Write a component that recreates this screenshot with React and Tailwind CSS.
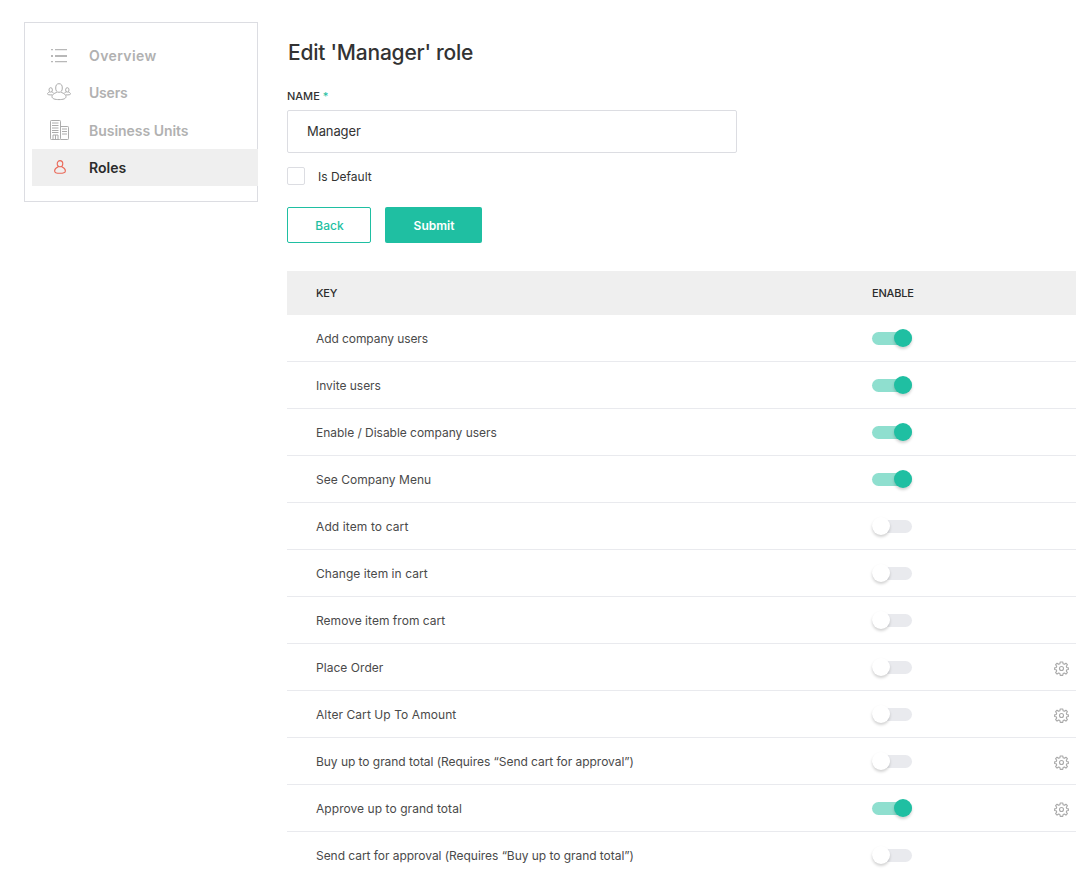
const NAV = [
  { label: "Overview", icon: ListIcon, text: "pb-px tracking-[0.4px]" },
  { label: "Users", icon: UsersIcon, text: "pb-px tracking-[-0.2px]" },
  { label: "Business Units", icon: BuildingsIcon, text: "pt-px tracking-[-0.03px]" },
  { label: "Roles", icon: RoleIcon, text: "pt-px tracking-[0px]", active: true },
];

const ROWS = [
  { label: "Add company users", on: true, text: "tracking-[-0.08px]" },
  { label: "Invite users", on: true, text: "tracking-[-0.03px]" },
  { label: "Enable / Disable company users", on: true, text: "tracking-[-0.03px]" },
  { label: "See Company Menu", on: true, text: "tracking-[0.02px]" },
  { label: "Add item to cart", text: "tracking-[0.11px]" },
  { label: "Change item in cart", text: "tracking-[0.05px]" },
  { label: "Remove item from cart", text: "tracking-[0.03px]" },
  { label: "Place Order", gear: true, text: "tracking-[0.05px]" },
  { label: "Alter Cart Up To Amount", gear: true, text: "tracking-[0.07px]" },
  { label: "Buy up to grand total (Requires “Send cart for approval”)", gear: true, text: "tracking-[-0.045px]" },
  { label: "Approve up to grand total", on: true, gear: true, text: "tracking-[0.06px]" },
  { label: "Send cart for approval (Requires “Buy up to grand total”)", text: "tracking-[-0.045px]" },
];

function ListIcon() {
  return (
    <svg className="mr-px" width="16" height="14" viewBox="0 0 16 14" fill="#b8b8b8">
      <path d="M0 0h2v1.300H0zM4 0h12v1.300H4zM0 6h2v2H0zM4 6h12v2H4zM0 12h2v1.300H0zM4 12h12v1.300H4z" />
    </svg>
  );
}

function UsersIcon() {
  return (
    <svg className="mr-px mb-px" width="24" height="18" viewBox="0 0 24 18" fill="none" stroke="#acacac" strokeWidth="1">
      <ellipse cx="12" cy="5" rx="3.3" ry="4.3" />
      <path d="M9.8 9.400C7 10.300 5 11.600 5 13.600c0 2.200 3 3 7 3s7-.8 7-3c0-2-2-3.300-4.800-4.200" />
      <ellipse cx="3.7" cy="6.900" rx="1.700" ry="2.200" />
      <ellipse cx="20.300" cy="6.900" rx="1.700" ry="2.200" />
      <path d="M2.700 9C1.200 9.500.5 10 .5 10.900c0 .8 1.600 1.100 4.500 1M4.700 9c.9.200 1.500.5 1.900 1M21.300 9c1.500.5 2.200 1 2.200 1.900 0 .8-1.600 1.100-4.500 1M19.300 9c-.9.200-1.500.5-1.900 1" />
    </svg>
  );
}

function BuildingsIcon() {
  return (
    <svg width="19" height="20" viewBox="0 0 19 20" fill="none" stroke="#acacac" strokeWidth="1">
      <rect x=".5" y=".5" width="10" height="19" rx=".8" />
      <path d="M10.500 6.500h7.200q.8 0 .8.8v11.400q0 .8-.8.8h-7.200" />
      <path d="M2 3h6.500M2 5.500h6.500M2 8h6.500M2 10.500h6.500M2 12.500h6.500M12 9h5M12 11.500h5M12 14h5M3 19.500v-4.500h5v4.500M5.500 15v4.500" />
    </svg>
  );
}

function RoleIcon() {
  return (
    <svg width="12" height="14" viewBox="0 0 12 14" fill="none" stroke="#ea6a5a" strokeWidth="1.100">
      <ellipse cx="6" cy="3.700" rx="2.800" ry="3.100" />
      <path d="M4.200 6.700C2.200 7.600.6 9 .6 10.900c0 1.700 2.300 2.400 5.400 2.400s5.400-.7 5.400-2.400c0-1.900-1.600-3.300-3.600-4.200" />
    </svg>
  );
}

function GearIcon() {
  return (
    <svg width="15" height="15" viewBox="0 0 24 24" fill="none" stroke="#a9a9a9" strokeWidth="1.800" strokeLinejoin="round">
      <path d="M10 1.500h4l.6 3 1.900.8 2.600-1.700 2.300 2.300-1.700 2.600.8 1.900 2.500.6v2.500l-2.500.6-.8 1.900 1.700 2.600-2.300 2.300-2.600-1.700-1.900.8-.6 3h-4l-.6-3-1.900-.8-2.600 1.700-2.300-2.300 1.700-2.600-.8-1.900-2.500-.6V11l2.500-.6.8-1.900-1.700-2.600 2.300-2.300 2.600 1.700 1.900-.8z" />
      <circle cx="12" cy="12" r="3.200" />
    </svg>
  );
}

function Toggle({ on }) {
  return (
    <span className={`flex h-[13px] w-10 items-center rounded-full ${on ? "justify-end bg-[#8fdfcf]" : "justify-start bg-[#e9eaee]"}`}>
      <span className={`size-[18px] shrink-0 rounded-full shadow-[0_2px_3px_rgba(0,0,0,0.18)] ${on ? "bg-[#1fbfa2]" : "bg-white"}`} />
    </span>
  );
}

export default function App() {
  return (
    <div className="flex h-[882px] w-[1092px] items-start overflow-hidden bg-white pl-6 font-['Inter','Liberation_Sans',sans-serif] text-[#333]">
      <nav className="mt-[22px] h-[180px] w-[234px] shrink-0 border border-[#dcdde2] pt-[14px] pl-[7px]">
        {NAV.map(({ label, icon: Icon, text, active }) => (
          <a key={label} className={`flex items-center ${active ? "-mr-px h-[37px] bg-[#efefef] text-[#2b2b2b]" : "h-[37.33px] text-[#b1b1b1]"}`}>
            <span className="flex w-[55px] shrink-0 justify-center">
              <Icon />
            </span>
            <span className={`ml-[2px] text-[14px] font-semibold whitespace-nowrap ${text}`}>{label}</span>
          </a>
        ))}
      </nav>

      <main className="ml-[29px] w-[789px]">
        <h1 className="mt-[38px] h-[30px] pl-px text-[21px] leading-[30px] font-medium tracking-[-0.23px] whitespace-nowrap">
          <span>Edit 'Manager' role</span>
        </h1>
        <label className="mt-5 block h-4 text-[11px] leading-4 font-medium tracking-[0px]">
          NAME <span className="text-[#1fbfa2]">*</span>
        </label>
        <div className="mt-[6px] flex h-[43px] w-[450px] items-center rounded-[2px] border border-[#dcdde2] px-[18px] text-[13px]">
          <span className="ml-px tracking-[-0.1px]">Manager</span>
        </div>
        <div className="mt-[14px] flex h-[18px] items-center">
          <span className="size-[18px] rounded-[2px] border border-[#dcdde2]" />
          <span className="ml-[13px] pt-px text-[12px]">Is Default</span>
        </div>
        <div className="mt-[22px] flex gap-[14px] text-[12px]">
          <button className="h-9 w-[84px] rounded-[2px] border border-[#1fbfa2] pt-px pl-px font-medium text-[#1fbfa2]">
            <span>Back</span>
          </button>
          <button className="h-9 w-[97px] rounded-[2px] bg-[#1fbfa2] pt-px pl-px font-semibold text-white">
            <span>Submit</span>
          </button>
        </div>

        <section className="mt-7">
          <div className="flex h-11 items-center bg-[#efefef] pl-[29px] text-[11px] font-medium tracking-[-0.2px] text-[#2b2b2b]">
            <div className="w-[556px]">
              <span>KEY</span>
            </div>
            <span>ENABLE</span>
          </div>
          {ROWS.map(({ label, on, gear, text }) => (
            <div key={label} className="flex h-[47px] items-center border-b border-[#e9eaee] pl-[29px] text-[12px] text-[#4a4a4a] last:border-transparent">
              <div className="w-[556px] pt-[2px] whitespace-nowrap">
                <span className={text}>{label}</span>
              </div>
              <Toggle on={on} />
              {gear && (
                <span className="mt-[3px] mr-[7px] ml-auto">
                  <GearIcon />
                </span>
              )}
            </div>
          ))}
        </section>
      </main>
    </div>
  );
}
